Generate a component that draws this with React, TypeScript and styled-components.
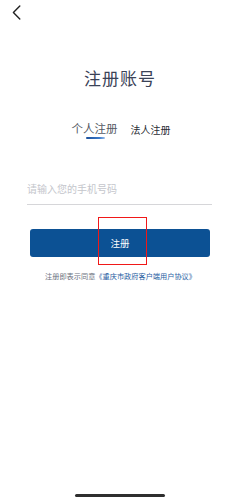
import { useState } from 'react'
import { createGlobalStyle, styled } from 'styled-components'

const GlobalStyle = createGlobalStyle`
  html, body {
    margin: 0;
    padding: 0;
    background: #fff;
  }
  body {
    font-family: "Noto Sans CJK SC", "Noto Sans", sans-serif;
  }
`

type Tab = 'personal' | 'legal'

const App = () => {
  const [tab, setTab] = useState<Tab>('personal')
  const [phone, setPhone] = useState('')

  return (
    <StyledPage>
      <GlobalStyle />
      <StyledHeader>
        <StyledBack aria-label="返回">
          <svg width="9" height="15" viewBox="0 0 9 15" fill="none">
            <path d="M7.8 1 L1.4 7.5 L7.8 14" stroke="#222" strokeWidth="1.4" strokeLinecap="round" strokeLinejoin="round" />
          </svg>
        </StyledBack>
      </StyledHeader>

      <StyledTitle>注册账号</StyledTitle>

      <StyledTabs>
        <StyledTab $active={tab === 'personal'} onClick={() => setTab('personal')}>
          个人注册
          <StyledIndicator $visible={tab === 'personal'} />
        </StyledTab>
        <StyledTab $active={tab === 'legal'} onClick={() => setTab('legal')}>
          法人注册
          <StyledIndicator $visible={tab === 'legal'} />
        </StyledTab>
      </StyledTabs>

      <StyledField>
        <input
          type="tel"
          placeholder="请输入您的手机号码"
          value={phone}
          onChange={(e) => setPhone(e.target.value)}
        />
      </StyledField>

      <StyledButtonWrap>
        <StyledButton type="button">注册</StyledButton>
        <StyledHighlight />
      </StyledButtonWrap>

      <StyledTerms>
        注册即表示同意<a href="#">《重庆市政府客户端用户协议》</a>
      </StyledTerms>

      <StyledHomeBar />
    </StyledPage>
  )
}

const StyledPage = styled.div`
  width: 240px;
  height: 500px;
  display: flex;
  flex-direction: column;
  overflow: hidden;
`

const StyledHeader = styled.div`
  height: 26px;
  display: flex;
  align-items: flex-start;
  padding: 5px 0 0 12px;
  box-sizing: border-box;
`

const StyledBack = styled.button`
  border: 0;
  background: none;
  padding: 0;
  width: 9px;
  height: 15px;
  display: flex;
`

const StyledTitle = styled.h1`
  margin: 40px 0 0;
  font-size: 17px;
  line-height: 24px;
  font-weight: 400;
  letter-spacing: 1px;
  color: #3a4257;
  text-align: center;
`

const StyledTabs = styled.div`
  margin-top: 30px;
  display: flex;
  justify-content: center;
  align-items: flex-start;
  gap: 13px;
  padding-left: 2px;
`

const StyledTab = styled.div<{ $active: boolean }>`
  display: flex;
  flex-direction: column;
  align-items: center;
  cursor: pointer;
  color: ${({ $active }) => ($active ? '#555a64' : '#2a2d33')};
  font-size: ${({ $active }) => ($active ? '11.5px' : '10px')};
  line-height: 16px;
  padding-top: ${({ $active }) => ($active ? '0' : '2px')};
`

const StyledIndicator = styled.span<{ $visible: boolean }>`
  visibility: ${({ $visible }) => ($visible ? 'visible' : 'hidden')};
  width: 19px;
  height: 2px;
  margin-top: 1px;
  margin-left: 2px;
  border-radius: 1px;
  background: linear-gradient(90deg, #1c4f9a, #3b79c9 70%, #9cc0ea);
`

const StyledField = styled.div`
  margin: 37px 28px 0 27px;
  border-bottom: 1px solid #d6d6d9;
  height: 26px;
  display: flex;
  align-items: center;

  input {
    width: 100%;
    border: 0;
    outline: none;
    padding: 0;
    margin-top: -6px;
    font-family: "Noto Sans CJK SC", "Noto Sans", sans-serif;
    font-size: 10px;
    color: #333;
    background: transparent;
  }

  input::placeholder {
    color: #c4c6cc;
  }
`

const StyledButtonWrap = styled.div`
  position: relative;
  margin: 24px 30px 0;
`

const StyledButton = styled.button`
  width: 100%;
  height: 28px;
  border: 0;
  border-radius: 3px;
  background: #0c5194;
  color: #fff;
  font-family: "Noto Sans CJK SC", "Noto Sans", sans-serif;
  font-size: 9.5px;
  display: flex;
  align-items: center;
  justify-content: center;
  padding: 0;
`

const StyledHighlight = styled.span`
  position: absolute;
  left: 68px;
  top: -12px;
  width: 49px;
  height: 48px;
  border: 1px solid #f01818;
  box-sizing: border-box;
  pointer-events: none;
`

const StyledTerms = styled.p`
  margin: 14px 0 0;
  font-size: 7.2px;
  line-height: 10px;
  text-align: center;
  color: #6c7280;
  padding-left: 1px;

  a {
    color: #1f5c9f;
    text-decoration: none;
  }
`

const StyledHomeBar = styled.div`
  margin: auto auto 3px;
  width: 90px;
  height: 3px;
  border-radius: 2px;
  background: #2e2e2e;
`

export default App
